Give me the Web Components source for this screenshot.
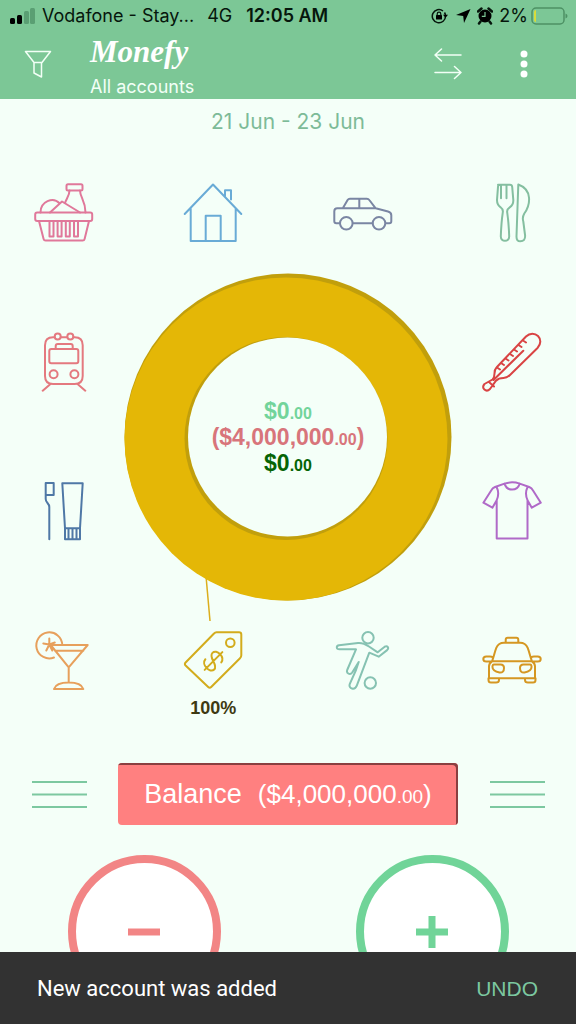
<!DOCTYPE html>
<html lang="en">
<head>
<meta charset="utf-8">
<meta name="viewport" content="width=device-width, initial-scale=1">
<title>Monefy</title>
<style>
  html { background: #f4fff8; }
  body { margin: 0; font-family: "Liberation Sans", Arial, sans-serif; }
</style>
</head>
<body>
<monefy-app>
  <status-bar slot="header" carrier="Vodafone - Stay..." network="4G" time="12:05 AM" battery="2%"></status-bar>
  <app-toolbar slot="header" heading="Monefy">All accounts</app-toolbar>
  <period-label>21 Jun - 23 Jun</period-label>
  <category-board>
    <category-item cell="1 / 1" icon="basket" label="Food" color="#e0789a"></category-item>
    <category-item cell="1 / 2" icon="house" label="House" color="#69abd6"></category-item>
    <category-item cell="1 / 3" icon="car" label="Car" color="#7a86a3"></category-item>
    <category-item cell="1 / 4" icon="cutlery" label="Eating out" color="#84bfa0"></category-item>
    <category-item cell="2 / 1" icon="train" label="Transport" color="#e4797f"></category-item>
    <category-item cell="2 / 4" icon="thermometer" label="Health" color="#d94444"></category-item>
    <category-item cell="3 / 1" icon="toothbrush" label="Toiletry" color="#4f78a6"></category-item>
    <category-item cell="3 / 4" icon="shirt" label="Clothes" color="#b06ac8"></category-item>
    <category-item cell="4 / 1" icon="cocktail" label="Entertainment" color="#e7a05c"></category-item>
    <category-item cell="4 / 2" icon="tag" label="Expense" color="#d3ac1c">100%</category-item>
    <category-item cell="4 / 3" icon="sport" label="Sports" color="#86c2b2"></category-item>
    <category-item cell="4 / 4" icon="taxi" label="Taxi" color="#d59722"></category-item>
    <spending-chart slot="chart">
      <money-amount value="$0" cents=".00" style="color:#72d49b"></money-amount>
      <money-amount value="($4,000,000" cents=".00" tail=")" style="color:#d8757b"></money-amount>
      <money-amount value="$0" cents=".00" style="color:#056405"></money-amount>
    </spending-chart>
  </category-board>
  <balance-bar>Balance<money-amount slot="amount" value="($4,000,000" cents=".00" tail=")"></money-amount></balance-bar>
  <entry-actions></entry-actions>
  <snack-bar slot="notice" action="UNDO">New account was added</snack-bar>
</monefy-app>

<script>
const ICONS = {
  basket: `<rect x="1.2" y="29.5" width="57" height="8.5" rx="2"/><path d="M5 38l4.600 18q.4 1.600 2 1.600h37q1.600 0 2-1.600L55 38M15.500 38v15.500h4V38M23.600 38v15.500h4V38M31.800 38v15.500h4V38M40 38v15.500h4V38"/><rect x="32.500" y="1.200" width="16" height="6.300" rx="1.500"/><path d="M35.500 7.500c0 5-3 8-4.300 12M46 7.500c0 7 5.500 10 5.500 22M6.500 29.500c0-11 12.500-16 19-9.300M16 29.500l12-11 18 11"/>`,
  house: `<path d="M1.700 31L30 1.500 58.300 31M7.700 25.500V58h45V25.500M22.700 58V32.700h15V58M42 13V7.200h6v9.300"/>`,
  car: `<path d="M7 40.300H3.300q-2 0-2-2v-10q0-3 3-3h5.500L14.600 17q.8-1.300 2.300-1.300h17q1.500 0 2.400 1.300l6.400 8.300 12.300 3.200q3.300.9 3.300 3.800v6q0 2-2 2h-3.500M19.800 40.300h19.700M9.800 25.300h33M26.300 15.700v9.600"/><circle cx="13.300" cy="40.300" r="6.300"/><circle cx="46" cy="40.300" r="6.300"/>`,
  cutlery: `<path d="M16 1.800h12q2 0 2.200 2l1.100 13q.3 5-3.600 7.500-3 2-2.500 5 1.500 10 2 24c.2 6-8.600 6-8.400 0q.5-14 2-24 .5-3-2.200-5-3.700-2.500-3.600-7.500l1-13q.1-2 2-2zM19 2v13.300M24.500 2v13.300M36.300 1.500c14 5 12.500 20 6 29q-2.300 4-1 8l1.800 14q.3 5.800-4.800 5.800-4 0-3.800-5z"/>`,
  train: `<path d="M20.700 5.300H19q-8 0-8 8V44q0 8 8 8h21.700q8 0 8-8V13.300q0-8-8-8h-1.400M26.700 5.300h6.600"/><circle cx="23.700" cy="4.500" r="3"/><circle cx="36.300" cy="4.500" r="3"/><rect x="15.300" y="17" width="29" height="14.300" rx="2"/><path d="M21.700 17v-3q0-2 2-2h13q2 0 2 2v3M16.500 52l-7.800 6.700M43.500 52l7.800 6.700"/><circle cx="19.600" cy="42.300" r="4"/><circle cx="40.400" cy="42.300" r="4"/>`,
  thermometer: `<path d="M10.500 47.500q2-2 2-6 0-4 2-6L44 4.500c4-4 9-3.500 12-.5s3.300 8-.5 12L28 43q-3 3-6.500 3-5 0-7.500 2.700l-6 8.300c-4 4-9-1-5.500-5zM7.500 50.500l4.500 4M11.500 48L41.300 18.700M15 35.500l3 2M19 31l3 2M23.500 26.500l3 2M28 22l3 2M32 17.500l3 2M36.500 13l3 2M41 8.500l3 2"/>`,
  toothbrush: `<path d="M11.700 14V2h8v12zM11.700 14v4q0 2 1.800 4t1.800 4v32.300M28.300 2.300h20.400L46 47.300v11H31v-11zM31 47.300h15M34.500 48v10M38.500 48v10M42.500 48v10"/>`,
  shirt: `<path d="M22.500 2.600L13 6q-2.500 1-3.500 3L1.400 21.700l9 5 4.300-7.500v38.300h30.800V19.200l4.300 7.500 9-5L50.700 9q-1-2-3.500-3l-9.500-3.400q-7.600-2.600-15.200 0c2.500 8 12.700 8 15.200 0M14.700 19.200q3-7 0-13M45.500 19.200q-3-7 0-13"/>`,
  cocktail: `<path d="M20 27.500a13 13 0 1 1 8.300-12.500M16.700 15h37L34.700 37.300zM21 20.700h28.300M34.700 37.300v15.200M20 59h29.300q-2-6.400-14.600-6.400T20 59zM15.300 14.500V8.500M15.300 14.500l-6-1M15.300 14.500l-3 6M15.300 14.500l3 6M15.300 14.500l5.500-2"/>`,
  tag: `<path d="M33.500 2.300H56q2.300 0 2.300 2.300v20.600q0 1.800-1.300 3L28.200 57q-1.500 1.500-3 0L2.600 35.500q-1.500-1.500 0-3L31 3.500q1.100-1.200 2.500-1.200z"/><circle cx="47.300" cy="12.700" r="4.300"/><g transform="rotate(45 30.500 31)"><path d="M30.500 18.500v25M37 26.500c-1-6.500-13-6.500-13-.5 0 6.500 13 4 13 10.500 0 6-13 6-13.500-1"/></g>`,
  sport: `<circle cx="35" cy="7.700" r="5.700"/><circle cx="37.300" cy="53" r="5.700"/><path d="M6 15.300l19-2.300q5-.5 11 3.500l8.700 5.800 7-5.600q2-1.200 3.200.4.800 1.500-.8 3l-8.400 6.600-9.400-4-12.500 33c-2 5-8.500 3-7.100-1.500L23 40l2.700-8-6.500 10.500c-2 3-6.200 1-5-2.500l8.800-20.700-16.500 0c-3.500 0-3.500-3.500-.5-4z"/>`,
  taxi: `<path d="M23.700 12.500V9.700q0-2 2-2h8.600q2 0 2 2v2.800M10 31.300c2-5 2.500-9 4.300-13.500Q16.500 12.700 22 12.700h16q5.500 0 7.700 5.100c1.800 4.500 2.300 8.500 4.300 13.500zM10 31.300q-3 2-3 5v12h46v-12q0-3-3-5M9.500 31.500H4.300c-4 0-4-5 0-5H8q3 0 3 2M50.500 31.500h5.200c4 0 4-5 0-5H52q-3 0-3 2M6.500 48.300V50q0 2.500 2.500 2.500h5q3 0 3-2.500v-1.700M53.500 48.300V50q0 2.500-2.500 2.500h-5q-3 0-3-2.500v-1.700"/><path d="M12 34.500h6.500q3.500 0 3.500 3.500 0 5-4.500 4.500-7.500-1.500-7-6 .1-2 1.500-2zM48 34.500h-6.500q-3.500 0-3.500 3.500 0 5 4.500 4.500 7.500-1.500 7-6-.1-2-1.500-2z"/>`
};

class BaseElement extends HTMLElement {
  connectedCallback() {
    if (this.shadowRoot) return;
    const t = document.createElement('template');
    t.innerHTML = this.render();
    this.attachShadow({ mode: 'open' }).append(t.content.cloneNode(true));
  }
  attr(name) { return this.getAttribute(name) || ''; }
}

customElements.define('monefy-app', class extends BaseElement {
  render() { return `
    <style>
      :host { display: flex; flex-direction: column; min-height: 100vh; background: #f4fff8; }
      header { background: #7cc796; }
      main { display: flex; flex-direction: column; }
    </style>
    <header><slot name="header"></slot></header>
    <main><slot></slot></main>
    <slot name="notice"></slot>`; }
});

customElements.define('status-bar', class extends BaseElement {
  render() { return `
    <style>
      :host { display: flex; align-items: center; height: 32px; padding: 0 8px 0 10px;
        font: 18px/32px Inter, sans-serif; color: #06160c; white-space: nowrap; }
      svg { display: block; flex: none; }
      .signal { margin-right: 6px; }
      .network { margin-left: 13px; }
      .time { margin-left: 14px; font-weight: 600; }
      .right { display: flex; align-items: center; gap: 6px; margin-left: auto; }
      .level { display: flex; align-items: center; gap: 3px; }
    </style>
    <svg class="signal" width="26" height="18" viewBox="0 0 26 18"><rect x="0" y="11" width="5" height="6" rx="1.500"/><rect x="7" y="8" width="5" height="9" rx="1.500"/><g fill="#5a9f73"><rect x="14" y="4" width="5" height="13" rx="1.500"/><rect x="20" y="1" width="5" height="16" rx="1.500"/></g></svg>
    <span>${this.attr('carrier')}</span>
    <span class="network">${this.attr('network')}</span>
    <span class="time">${this.attr('time')}</span>
    <span class="right">
      <svg width="18" height="16" viewBox="0 0 18 16"><path d="M14.500 8A6.600 6.600 0 1 1 12 3M14.500 8A6.600 6.600 0 0 0 13.500 4.500" fill="none" stroke="#06160c" stroke-width="1.500"/><path d="M12 6.800h5l-2.500 3z"/><rect x="5" y="7" width="6" height="4.500" rx=".6"/><path d="M6.200 7.500V6a1.800 1.800 0 0 1 3.600 0v1.500" fill="none" stroke="#06160c" stroke-width="1.200"/></svg>
      <svg width="16" height="16" viewBox="0 0 16 16"><path d="M15.500 1L9 15 8.200 8 1 7z"/></svg>
      <svg width="16" height="18" viewBox="0 0 16 18"><circle cx="8" cy="9" r="6.500"/><path d="M1 4.500L4.500 1.500M15 4.500l-3.500-3M3.500 14.500L2 16.500M12.500 14.500l1.500 2" stroke="#06160c" stroke-width="2.500" stroke-linecap="round"/><path d="M8 5v4.300H4.800" fill="none" stroke="#7cc796" stroke-width="1.200"/></svg>
      <span class="level">${this.attr('battery')}
      <svg width="37" height="20" viewBox="0 0 37 20"><rect x="1" y="2" width="32" height="16" rx="4" fill="none" stroke="#4d9164" stroke-width="1.500"/><path d="M3 6q0-2 2-2v12q-2 0-2-2z" fill="#d8dc3a"/><path d="M34.500 7.500v5q2-.8 2-2.500t-2-2.500z" fill="#4d9164"/></svg></span>
    </span>`; }
});

customElements.define('app-toolbar', class extends BaseElement {
  render() { return `
    <style>
      :host { display: flex; align-items: flex-start; height: 67px; color: #fff; }
      button { all: unset; display: grid; place-items: center; height: 64px; width: 76px; cursor: pointer; }
      svg { display: block; fill: none; stroke: #f2fff6; stroke-width: 1.500; stroke-linejoin: round; stroke-linecap: round; }
      .title { display: flex; flex-direction: column; flex: 1; margin-left: 14px; }
      h1 { margin: 0; font: italic 700 31px/40px "Liberation Serif", cursive; }
      span { padding-top: 4px; font: 18px/22px Inter, sans-serif; color: #f2fff6; }
      .more svg { fill: #fff; stroke: none; }
      .more { margin-right: 14px; }
    </style>
    <button aria-label="Filter"><svg width="28" height="28" viewBox="0 0 28 28"><path d="M1.500 1.500h25L18 12.500H10zM10 12.500v10.500l7.500 4V12.500"/></svg></button>
    <div class="title"><h1>${this.attr('heading')}</h1><span><slot></slot></span></div>
    <button aria-label="Transfer"><svg width="28" height="32" viewBox="0 0 28 32"><path d="M27 7H1M7.500 1L1 7l6.500 6M1 24.500h26M20.500 18.500l6.500 6-6.500 6"/></svg></button>
    <button class="more" aria-label="More"><svg width="8" height="28" viewBox="0 0 8 28"><circle cx="4" cy="4" r="3.500"/><circle cx="4" cy="14" r="3.500"/><circle cx="4" cy="24" r="3.500"/></svg></button>`; }
});

customElements.define('period-label', class extends BaseElement {
  render() { return `
    <style>:host { display: block; padding-top: 8px; text-align: center; font: 21px/30px Inter, sans-serif; color: #7dbb98; }</style>
    <slot></slot>`; }
});

customElements.define('category-board', class extends BaseElement {
  render() { return `
    <style>
      :host { display: grid; grid-template-columns: repeat(4, 60px); grid-template-rows: 60px 60px 60px 90px;
        justify-content: space-between; row-gap: 89px; padding: 46px 34px 43px; }
      ::slotted([slot="chart"]) { grid-area: 2 / 1 / 4 / 5; place-self: center; }
    </style>
    <slot></slot><slot name="chart"></slot>`; }
});

customElements.define('category-item', class extends BaseElement {
  render() { return `
    <style>
      :host { display: block; grid-area: ${this.attr('cell')}; z-index: 1; }
      button { all: unset; display: flex; flex-direction: column; align-items: center; width: 60px; cursor: pointer; }
      svg { display: block; fill: none; stroke: ${this.attr('color')}; stroke-width: 2; stroke-linejoin: round; stroke-linecap: round; }
      span { font: 700 18px/36px "Liberation Sans", Arial, sans-serif; color: #3e3a12; }
    </style>
    <button aria-label="${this.attr('label')}">
      <svg width="60" height="60" viewBox="0 0 60 60">${ICONS[this.attr('icon')]}</svg>
      <span><slot></slot></span>
    </button>`; }
});

customElements.define('money-amount', class extends BaseElement {
  render() { return `
    <style>
      :host { display: block; white-space: nowrap; }
      small { font-size: var(--cents-size, 16px); line-height: 1; }
    </style>${this.attr('value')}<small>${this.attr('cents')}</small>${this.attr('tail')}`; }
});

customElements.define('spending-chart', class extends BaseElement {
  render() { return `
    <style>
      :host { display: grid; place-items: center; width: 328px; height: 328px; }
      svg, div { grid-area: 1 / 1; }
      svg { display: block; overflow: visible; }
      div { font: 700 23px/26px "Liberation Sans", Arial, sans-serif; text-align: center; }
    </style>
    <svg width="328" height="328" viewBox="0 0 328 328" aria-hidden="true">
      <path d="M82 303l4 45" stroke="#dcae1c" stroke-width="1.500"/>
      <circle cx="164" cy="164" r="163.500" fill="#c19f0c"/>
      <circle cx="162" cy="166" r="161.500" fill="#e4b706"/>
      <circle cx="162" cy="165.500" r="101.500" fill="#c19f0c"/>
      <circle cx="163.500" cy="164" r="99.500" fill="#f4fff8"/>
    </svg>
    <div><slot></slot></div>`; }
});

customElements.define('balance-bar', class extends BaseElement {
  render() {
    const lines = '<svg width="56" height="28" viewBox="0 0 56 28"><path d="M1 2h55M1 14.500h55M1 27h55"/></svg>';
    return `
    <style>
      :host { display: flex; align-items: center; gap: 31px; padding: 0 31px; }
      button { all: unset; box-sizing: border-box; cursor: pointer; }
      svg { display: block; stroke: #7cc8a0; stroke-width: 2; }
      .balance { flex: 1; display: flex; justify-content: center; gap: 16px; height: 62px; border-radius: 4px;
        background: #ff8080; box-shadow: inset -2px 2px #8a3f40; color: #fff; --cents-size: 19px;
        font: 27px/62px "Liberation Sans", Arial, sans-serif; white-space: nowrap; }
      .amount { font-size: 26px; }
    </style>
    <button aria-label="Menu">${lines}</button>
    <button class="balance"><span><slot></slot></span><span class="amount"><slot name="amount"></slot></span></button>
    <button aria-label="Records">${lines}</button>`; }
});

customElements.define('entry-actions', class extends BaseElement {
  render() { return `
    <style>
      :host { display: grid; grid-template-columns: 1fr 1fr; justify-items: center; padding-top: 30px; }
      button { all: unset; box-sizing: border-box; display: grid; place-items: center; width: 153px; height: 153px;
        border: 8px solid currentColor; border-radius: 50%; background: #fff; cursor: pointer; }
      .expense { color: #f28585; }
      .income { color: #70d498; }
      svg { display: block; stroke: currentColor; stroke-width: 7; }
    </style>
    <button class="expense" aria-label="Add expense"><svg width="32" height="32" viewBox="0 0 32 32"><path d="M0 16h32"/></svg></button>
    <button class="income" aria-label="Add income"><svg width="32" height="32" viewBox="0 0 32 32"><path d="M0 16h32M16 0v32"/></svg></button>`; }
});

customElements.define('snack-bar', class extends BaseElement {
  render() { return `
    <style>
      :host { position: fixed; z-index: 2; left: 0; right: 0; bottom: 0; display: flex; align-items: center; justify-content: space-between;
        box-sizing: border-box; height: 72px; padding: 2px 38px 0 37px; background: #323232; color: #fff;
        font: 22px/30px Roboto, sans-serif; }
      button { all: unset; cursor: pointer; color: #7cc8a0; font: 21px/30px "Liberation Sans", Arial, sans-serif; }
    </style>
    <span role="status"><slot></slot></span><button>${this.attr('action')}</button>`; }
});
</script>
</body>
</html>
